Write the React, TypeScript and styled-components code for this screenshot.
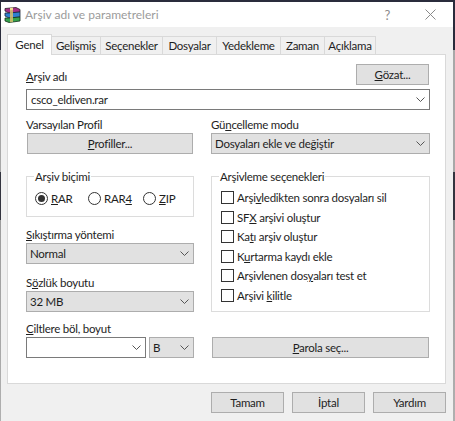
import React from 'react';
import styled, { createGlobalStyle } from 'styled-components';

const GlobalStyle = createGlobalStyle`
  html, body {
    margin: 0;
    padding: 0;
    background: #f0f0f0;
  }
  * {
    box-sizing: border-box;
  }
`;

const Screen = styled.div`
  width: 455px;
  height: 421px;
  overflow: hidden;
  display: flex;
  background: #f0f0f0;
  font-family: Lato, Roboto, sans-serif;
  font-size: 11.5px;
  letter-spacing: -0.25px;
  color: #1e1e1e;
`;

const EdgeStrip = styled.div<{ $w: number }>`
  width: ${p => p.$w}px;
  flex: none;
  background: linear-gradient(
    to bottom,
    #2a2c3c 0,
    #2a2c3c 50px,
    #a8a8a8 50px,
    #a8a8a8 172px,
    #33343f 172px,
    #33343f 220px,
    #9c9c9c 220px,
    #b0b0b0 100%
  );
`;

const Win = styled.div`
  flex: 1;
  display: flex;
  flex-direction: column;
  border-top: 2px solid #2a2c3c;
`;

const TitleBar = styled.div`
  height: 25px;
  flex: none;
  background: #fff;
  display: flex;
  align-items: center;
  padding: 0 17px 0 3px;
`;

const TitleText = styled.div`
  margin-left: 4px;
  font-size: 12px;
  letter-spacing: 0;
  color: #9b9b9b;
  flex: 1;
`;

const HelpMark = styled.div`
  color: #8c8c8c;
  font-size: 13px;
  margin-right: 35px;
`;

const Body = styled.div`
  flex: 1;
  padding: 9px 7px 0 6px;
  display: flex;
  flex-direction: column;
`;

const TabRow = styled.div`
  display: flex;
  height: 19px;
  margin-bottom: -1px;
  position: relative;
  z-index: 1;
`;

const Tab = styled.div<{ $active?: boolean; $w: number }>`
  width: ${p => p.$w}px;
  height: ${p => (p.$active ? 21 : 19)}px;
  margin-top: ${p => (p.$active ? -2 : 0)}px;
  background: ${p => (p.$active ? '#fff' : '#f0f0f0')};
  border: 1px solid #d9d9d9;
  border-bottom: ${p => (p.$active ? 'none' : '1px solid #d9d9d9')};
  border-left: ${p => (p.$active ? '1px solid #d9d9d9' : 'none')};
  text-align: center;
  line-height: ${p => (p.$active ? 19 : 17)}px;
  white-space: nowrap;
`;

const Panel = styled.div`
  height: 330px;
  background: #fff;
  border: 1px solid #d9d9d9;
  padding: 9px 0 0 18px;
  display: grid;
  grid-template-columns: 168px 219px;
  column-gap: 17px;
  align-content: start;
`;

const NameBlock = styled.div`
  grid-column: 1 / -1;
  margin-bottom: 6px;
`;

const NameHead = styled.div`
  display: flex;
  justify-content: space-between;
  align-items: flex-end;
  padding-right: 1px;
  margin-bottom: 4px;
`;

const Label = styled.div<{ $mt?: number }>`
  height: 17px;
  line-height: 18px;
  margin-top: ${p => p.$mt ?? 0}px;
  white-space: nowrap;
`;

const Column = styled.div`
  display: flex;
  flex-direction: column;
`;

const Btn = styled.div<{ $w?: number; $inset?: boolean; $mt?: number }>`
  width: ${p => (p.$w ? `${p.$w}px` : 'auto')};
  height: 21px;
  flex: none;
  margin: ${p => p.$mt ?? 0}px ${p => (p.$inset ? 1 : 0)}px 0;
  background: #e1e1e1;
  border: 1px solid #adadad;
  display: flex;
  align-items: center;
  justify-content: center;
`;

const Combo = styled.div<{ $white?: boolean; $w?: number }>`
  width: ${p => (p.$w ? `${p.$w}px` : '100%')};
  height: 21px;
  flex: none;
  background: ${p => (p.$white ? '#fff' : '#e1e1e1')};
  border: 1px solid ${p => (p.$white ? '#7a7a7a' : '#adadad')};
  display: flex;
  align-items: center;
  justify-content: space-between;
  padding: 0 4px 0 ${p => (p.$white ? 4 : 3)}px;
  white-space: nowrap;
`;

const Group = styled.fieldset<{ $h: number }>`
  margin: 15px 0 0;
  padding: 0;
  height: ${p => p.$h}px;
  border: 1px solid #dcdcdc;
  min-width: 0;
`;

const Legend = styled.legend`
  margin-left: 7px;
  padding: 0 1px;
  line-height: 15px;
`;

const RadioRow = styled.div`
  display: flex;
  padding: 6px 0 0 8px;
`;

const RadioItem = styled.div<{ $w: number }>`
  width: ${p => p.$w}px;
  height: 16px;
  display: flex;
  align-items: center;
  gap: 3px;
`;

const RadioCircle = styled.span<{ $on?: boolean }>`
  width: 13px;
  height: 13px;
  flex: none;
  border-radius: 50%;
  border: 1px solid #333;
  display: flex;
  align-items: center;
  justify-content: center;
  &::after {
    content: '';
    display: ${p => (p.$on ? 'block' : 'none')};
    width: 7px;
    height: 7px;
    border-radius: 50%;
    background: #333;
  }
`;

const CheckList = styled.div`
  display: flex;
  flex-direction: column;
  padding: 4px 0 0 9px;
`;

const CheckRow = styled.div`
  height: 19.5px;
  display: flex;
  align-items: center;
  gap: 3px;
  white-space: nowrap;
`;

const CheckBox = styled.span`
  width: 13px;
  height: 13px;
  flex: none;
  background: #fff;
  border: 1px solid #333;
`;

const SplitRow = styled.div`
  display: flex;
  gap: 3px;
`;

const Footer = styled.div`
  display: flex;
  justify-content: flex-end;
  gap: 8px;
  padding-top: 8px;
`;

const Ul = styled.span`
  text-decoration: underline;
`;

const ChevronSvg = styled.svg`
  width: 9px;
  height: 5px;
  flex: none;
`;

const Chevron = () => (
  <ChevronSvg viewBox="0 0 9 5">
    <path d="M0.5 0.5 L4.5 4.5 L8.5 0.5" fill="none" stroke="#555" strokeWidth="1" />
  </ChevronSvg>
);

const RarIcon = () => (
  <svg width="17" height="16" viewBox="0 0 17 16">
    <path d="M1 1.5 L12 0.5 L16 2.5 L16 5 L5 6 L1 4 Z" fill="#a62f86" stroke="#2a1f2a" strokeWidth="0.8" />
    <path d="M1 6 L5 6 L16 5 L16 10 L5 11 L1 9 Z" fill="#2f7fd0" stroke="#16263a" strokeWidth="0.8" />
    <path d="M1 11 L5 11 L16 10 L16 14 L5 15.5 L1 14 Z" fill="#35a24c" stroke="#14301c" strokeWidth="0.8" />
    <path d="M6 1 L9 0.7 L9 15 L6 15.3 Z" fill="#d8bf6d" opacity="0.85" />
    <path d="M6 1 L9 0.7 L9 3 L6 3.3 Z" fill="#f0dc8e" />
  </svg>
);

const CloseIcon = () => (
  <svg width="11" height="11" viewBox="0 0 11 11">
    <path d="M0.5 0.5 L10.5 10.5 M10.5 0.5 L0.5 10.5" stroke="#8a8a8a" strokeWidth="1" />
  </svg>
);

const tabs = [
  { label: 'Genel', w: 45, active: true },
  { label: 'Gelişmiş', w: 49 },
  { label: 'Seçenekler', w: 62 },
  { label: 'Dosyalar', w: 54 },
  { label: 'Yedekleme', w: 64 },
  { label: 'Zaman', w: 44 },
  { label: 'Açıklama', w: 51 },
];

const checks: React.ReactNode[] = [
  <>Arşi<Ul>v</Ul>ledikten sonra dosyaları sil</>,
  <>SF<Ul>X</Ul> arşivi oluştur</>,
  <>Ka<Ul>t</Ul>ı arşiv oluştur</>,
  <>K<Ul>u</Ul>rtarma kaydı ekle</>,
  <>Arşivlenen dos<Ul>y</Ul>aları test et</>,
  <>Arşivi <Ul>k</Ul>ilitle</>,
];

const App: React.FC = () => {
  return (
    <Screen>
      <GlobalStyle />
      <EdgeStrip $w={1} />
      <Win>
        <TitleBar>
          <RarIcon />
          <TitleText>Arşiv adı ve parametreleri</TitleText>
          <HelpMark>?</HelpMark>
          <CloseIcon />
        </TitleBar>
        <Body>
          <TabRow>
            {tabs.map(t => (
              <Tab key={t.label} $active={t.active} $w={t.w}>{t.label}</Tab>
            ))}
          </TabRow>
          <Panel>
            <NameBlock>
              <NameHead>
                <Label><Ul>A</Ul>rşiv adı</Label>
                <Btn $w={73}><span><Ul>G</Ul>özat...</span></Btn>
              </NameHead>
              <Combo $white>csco_eldiven.rar<Chevron /></Combo>
            </NameBlock>

            <Column>
              <Label>Varsayılan Profil</Label>
              <Btn $inset><span><Ul>P</Ul>rofiller...</span></Btn>
              <Group $h={48}>
                <Legend>Arşiv biçimi</Legend>
                <RadioRow>
                  <RadioItem $w={53}><RadioCircle $on /><span><Ul>R</Ul>AR</span></RadioItem>
                  <RadioItem $w={55}><RadioCircle /><span>RAR<Ul>4</Ul></span></RadioItem>
                  <RadioItem $w={40}><RadioCircle /><span><Ul>Z</Ul>IP</span></RadioItem>
                </RadioRow>
              </Group>
              <Label $mt={9}><Ul>S</Ul>ıkıştırma yöntemi</Label>
              <Combo>Normal<Chevron /></Combo>
              <Label $mt={10}>S<Ul>ö</Ul>zlük boyutu</Label>
              <Combo>32 MB<Chevron /></Combo>
              <Label $mt={8}><Ul>C</Ul>iltlere böl, boyut</Label>
              <SplitRow>
                <Combo $white $w={120}><span /><Chevron /></Combo>
                <Combo $w={45}>B<Chevron /></Combo>
              </SplitRow>
            </Column>

            <Column>
              <Label>Gü<Ul>n</Ul>celleme modu</Label>
              <Combo>Dosyaları ekle ve değiştir<Chevron /></Combo>
              <Group $h={143}>
                <Legend>Arşivleme seçenekleri</Legend>
                <CheckList>
                  {checks.map((c, i) => (
                    <CheckRow key={i}><CheckBox /><span>{c}</span></CheckRow>
                  ))}
                </CheckList>
              </Group>
              <Btn $inset $mt={25}><span><Ul>P</Ul>arola seç...</span></Btn>
            </Column>
          </Panel>
          <Footer>
            <Btn $w={73}>Tamam</Btn>
            <Btn $w={73}>İptal</Btn>
            <Btn $w={73}>Yardım</Btn>
          </Footer>
        </Body>
      </Win>
      <EdgeStrip $w={2} />
    </Screen>
  );
};

export default App;
